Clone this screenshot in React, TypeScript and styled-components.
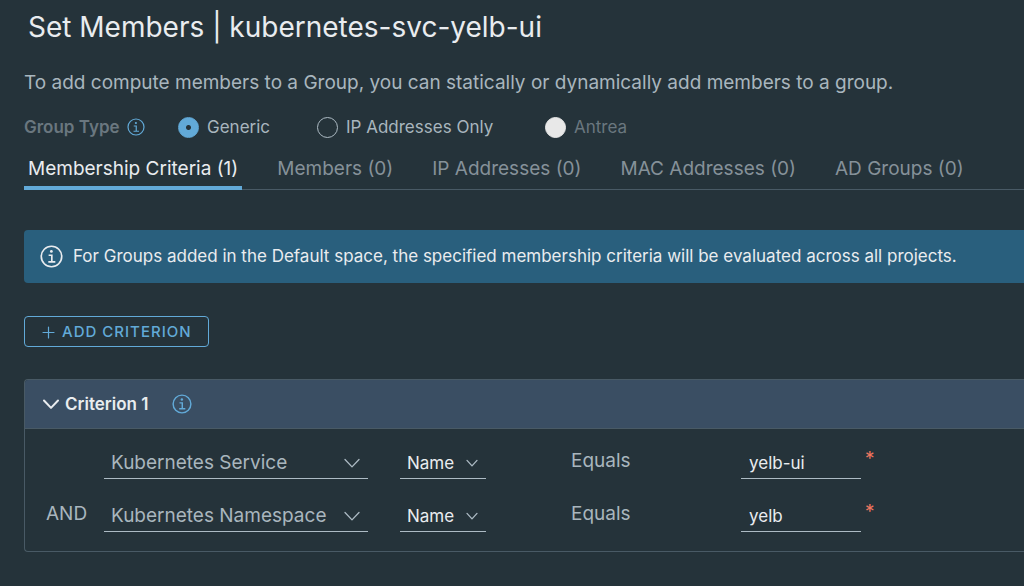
import React, { useState } from "react";
import styled, { createGlobalStyle, css } from "styled-components";

const color = {
  page: "#25333a",
  text: "#a9b6be",
  bright: "#e9ecef",
  muted: "#6a777f",
  tab: "#859199",
  accent: "#62aad8",
  line: "#495a65",
  underline: "#adbbc4",
  alert: "#295f7d",
  header: "#3a4e63",
  required: "#f0765f",
};

const GlobalStyle = createGlobalStyle`
  * { box-sizing: border-box; }
  body {
    margin: 0;
    background: ${color.page};
    color: ${color.text};
    font-family: Inter, "Open Sans", sans-serif;
    font-size: 19px;
    line-height: 24px;
    overflow-x: hidden;
  }
  button, input, select { font: inherit; color: inherit; }
`;

const Page = styled.main`
  padding: 9px 0 32px 24px;
`;

const Title = styled.h1`
  margin: 0 0 0 4px;
  font-size: 28px;
  line-height: 36px;
  font-weight: 400;
  color: ${color.bright};
  white-space: nowrap;
`;

const Description = styled.p`
  margin: 26px 0 20px;
  white-space: nowrap;
`;

const GroupType = styled.fieldset`
  display: grid;
  grid-template-columns: 154px 139px 228px auto;
  justify-content: start;
  align-items: center;
  margin: 0;
  padding: 0;
  border: 0;
  font-size: 17px;
  white-space: nowrap;
`;

const GroupLabel = styled.div`
  display: flex;
  align-items: center;
  gap: 7px;
  font-weight: 600;
  color: ${color.muted};
`;

const RadioLabel = styled.label<{ $disabled?: boolean }>`
  display: flex;
  align-items: center;
  gap: 8px;
  color: ${(p) => (p.$disabled ? color.muted : color.text)};
`;

const Radio = styled.input`
  appearance: none;
  width: 21px;
  height: 21px;
  margin: 0;
  border: 1px solid ${color.underline};
  border-radius: 50%;
  &:checked {
    border-color: ${color.accent};
    background: radial-gradient(circle, ${color.page} 2px, ${color.accent} 3px);
  }
  &:disabled {
    border-color: #e8e8e8;
    background: #e8e8e8;
  }
`;

const IconButton = styled.button`
  display: flex;
  padding: 0;
  border: 0;
  background: none;
  color: ${color.accent};
`;

const Tabs = styled.div`
  display: flex;
  gap: 31px;
  margin-top: 15px;
  border-bottom: 1px solid ${color.line};
`;

const Tab = styled.button<{ $active: boolean }>`
  margin: 0 0 -1px;
  padding: 3px 4px 5px;
  border: 0;
  border-bottom: 4px solid transparent;
  background: none;
  color: ${color.tab};
  white-space: nowrap;
  ${(p) =>
    p.$active &&
    css`
      border-color: ${color.accent};
      color: ${color.bright};
    `}
`;

const Alert = styled.div`
  display: flex;
  align-items: center;
  gap: 10px;
  margin-top: 40px;
  padding: 14px 16px 15px;
  border-radius: 4px 0 0 4px;
  background: ${color.alert};
  color: ${color.bright};
  font-size: 17px;
  white-space: nowrap;
`;

const AddButton = styled.button`
  display: flex;
  align-items: center;
  gap: 7px;
  margin: 33px 0 32px;
  padding: 3px 16px 2px 17px;
  border: 1px solid ${color.accent};
  border-radius: 4px;
  background: none;
  color: ${color.accent};
  font-size: 15px;
  font-weight: 500;
  letter-spacing: 1px;
  text-transform: uppercase;
`;

const Panel = styled.section`
  border: 1px solid ${color.line};
  border-right: 0;
  border-radius: 4px 0 0 4px;
`;

const PanelHeader = styled.header`
  display: flex;
  align-items: center;
  gap: 24px;
  padding: 12px 18px;
  border-bottom: 1px solid ${color.line};
  border-radius: 3px 0 0 0;
  background: ${color.header};
`;

const PanelToggle = styled.button`
  display: flex;
  align-items: center;
  gap: 6px;
  padding: 0;
  border: 0;
  background: none;
  color: ${color.bright};
  font-size: 17px;
  font-weight: 600;
`;

const Conditions = styled.div`
  display: grid;
  gap: 21px;
  padding: 18px 0 19px 21px;
`;

const Condition = styled.div`
  display: grid;
  grid-template-columns: 58px 264px 32px 86px 85px 170px 120px auto;
  justify-content: start;
`;

const Cell = styled.span<{ $column: number }>`
  grid-column: ${(p) => p.$column};
  padding-top: 2px;
`;

const SelectBox = styled.div<{ $column: number; $strong?: boolean }>`
  grid-column: ${(p) => p.$column};
  display: grid;
  grid-template-columns: 1fr auto;
  align-items: center;
  border-bottom: 1px solid ${color.underline};
  color: ${(p) => (p.$strong ? color.bright : color.text)};
  font-size: ${(p) => (p.$strong ? 17 : 19)}px;
  svg {
    grid-area: 1 / 2;
    margin-right: 8px;
    color: ${color.underline};
    pointer-events: none;
  }
`;

const Select = styled.select`
  grid-area: 1 / 1 / 2 / 3;
  appearance: none;
  width: 100%;
  height: 31px;
  padding: 0 0 0 7px;
  border: 0;
  background: none;
  outline: none;
  option { background: ${color.page}; }
`;

const ValueInput = styled.input`
  grid-column: 7;
  width: 100%;
  height: 32px;
  padding: 0 8px;
  border: 0;
  border-bottom: 1px solid ${color.underline};
  background: none;
  color: ${color.bright};
  font-size: 17px;
  outline: none;
`;

const Required = styled.span`
  grid-column: 8;
  padding-left: 4px;
  color: ${color.required};
`;

function InfoIcon({ size, stroke = 2 }: { size: number; stroke?: number }) {
  return (
    <svg width={size} height={size} viewBox="0 0 36 36" fill="none" stroke="currentColor" strokeWidth={stroke} aria-hidden="true">
      <circle cx="18" cy="18" r="16" />
      <circle cx="17.8" cy="10" r="2.2" fill="currentColor" stroke="none" />
      <path d="M13.5 16H18.5V26.5M13 26.5H24" />
    </svg>
  );
}

function Chevron({ width, weight = 1.3 }: { width: number; weight?: number }) {
  return (
    <svg width={width} height={width} viewBox={`0 0 ${width} ${width}`} fill="none" stroke="currentColor" strokeWidth={weight} strokeLinecap="round" strokeLinejoin="round" aria-hidden="true">
      <path d={`M1 ${width * 0.28}L${width / 2} ${width * 0.74}L${width - 1} ${width * 0.28}`} />
    </svg>
  );
}

function PlusIcon() {
  return (
    <svg width="13" height="13" viewBox="0 0 13 13" stroke="currentColor" strokeWidth="1.2" strokeLinecap="round" aria-hidden="true">
      <path d="M6.5 1V12M1 6.5H12" />
    </svg>
  );
}

const tabs = [
  "Membership Criteria (1)",
  "Members (0)",
  "IP Addresses (0)",
  "MAC Addresses (0)",
  "AD Groups (0)",
];

const members = ["Kubernetes Service", "Kubernetes Namespace"];

const conditions = [
  { id: "service", joiner: "", member: "Kubernetes Service", value: "yelb-ui" },
  { id: "namespace", joiner: "AND", member: "Kubernetes Namespace", value: "yelb" },
];

export default function App() {
  const [active, setActive] = useState(0);
  const [open, setOpen] = useState(true);

  return (
    <>
      <GlobalStyle />
      <Page>
        <Title>Set Members | kubernetes-svc-yelb-ui</Title>
        <Description>
          To add compute members to a Group, you can statically or dynamically add members to a group.
        </Description>
        <GroupType aria-label="Group Type">
          <GroupLabel>
            Group Type
            <IconButton type="button" aria-label="About group types">
              <InfoIcon size={18} stroke={2.4} />
            </IconButton>
          </GroupLabel>
          <RadioLabel>
            <Radio type="radio" name="group-type" defaultChecked />
            Generic
          </RadioLabel>
          <RadioLabel>
            <Radio type="radio" name="group-type" />
            IP Addresses Only
          </RadioLabel>
          <RadioLabel $disabled>
            <Radio type="radio" name="group-type" disabled />
            Antrea
          </RadioLabel>
        </GroupType>

        <Tabs role="tablist">
          {tabs.map((label, i) => (
            <Tab key={label} type="button" role="tab" aria-selected={i === active} $active={i === active} onClick={() => setActive(i)}>
              {label}
            </Tab>
          ))}
        </Tabs>

        <Alert role="status">
          <InfoIcon size={23} stroke={2.6} />
          For Groups added in the Default space, the specified membership criteria will be evaluated across all projects.
        </Alert>

        <AddButton type="button">
          <PlusIcon />
          Add Criterion
        </AddButton>

        <Panel>
          <PanelHeader>
            <PanelToggle type="button" aria-expanded={open} onClick={() => setOpen(!open)}>
              <Chevron width={16} weight={2} />
              Criterion 1
            </PanelToggle>
            <IconButton type="button" aria-label="About criterion 1">
              <InfoIcon size={20} stroke={2.6} />
            </IconButton>
          </PanelHeader>
          {open && (
            <Conditions>
              {conditions.map((c) => (
                <Condition key={c.id}>
                  <Cell $column={1}>{c.joiner}</Cell>
                  <SelectBox $column={2}>
                    <Select aria-label="Member type" defaultValue={c.member}>
                      {members.map((m) => (
                        <option key={m}>{m}</option>
                      ))}
                    </Select>
                    <Chevron width={16} />
                  </SelectBox>
                  <SelectBox $column={4} $strong>
                    <Select aria-label="Property" defaultValue="Name">
                      <option>Name</option>
                    </Select>
                    <Chevron width={12} />
                  </SelectBox>
                  <Cell $column={6}>Equals</Cell>
                  <ValueInput aria-label="Value" defaultValue={c.value} required />
                  <Required aria-hidden="true">*</Required>
                </Condition>
              ))}
            </Conditions>
          )}
        </Panel>
      </Page>
    </>
  );
}
